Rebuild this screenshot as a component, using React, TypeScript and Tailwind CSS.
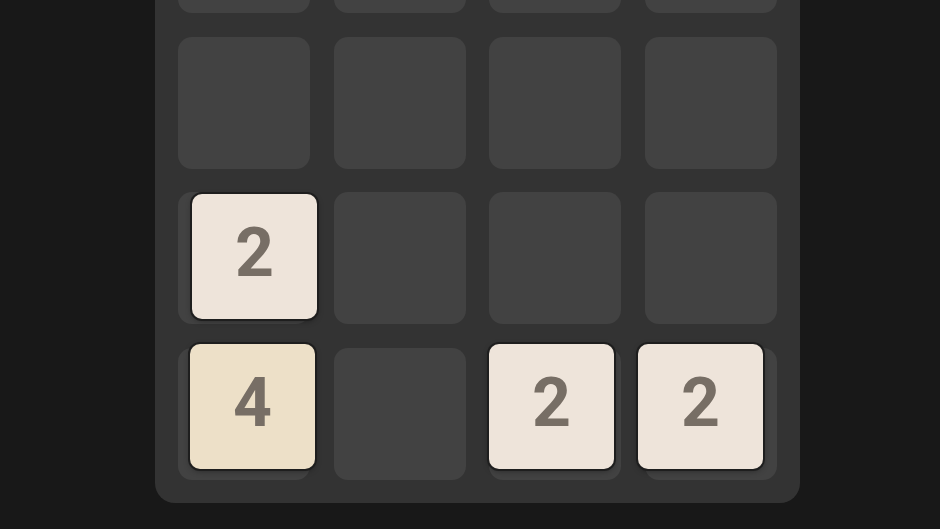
type Tile = { value: number; x: number; y: number }

// empty board slots, 4x4
const cells = Array.from({ length: 16 }, (_, i) => i)

// tiles sit over the grid mid-slide, so they carry their own offsets
const tiles: Tile[] = [
  { value: 2, x: 37, y: 336 },
  { value: 4, x: 35, y: 486 },
  { value: 2, x: 334, y: 486 },
  { value: 2, x: 483, y: 486 },
]

const tileColors: Record<number, string> = {
  2: "bg-[#eee4da]",
  4: "bg-[#ede0c8]",
}

const TileBlock = ({ tile }: { tile: Tile }) => {
  return (
    <div
      className={`absolute w-[125px] h-[125px] rounded-[10px] ${tileColors[tile.value]} ring-2 ring-[#1e1e1e] shadow-[0_2px_6px_rgba(0,0,0,0.4)] flex items-center justify-center`}
      style={{ left: tile.x, top: tile.y }}
    >
      <span className="text-[68px] leading-none font-bold text-[#776e65] font-['Roboto',sans-serif] -mt-[7px]">
        {tile.value}
      </span>
    </div>
  )
}

export default function App() {
  return (
    <div className="h-screen overflow-hidden bg-[#181818]">
      <div className="pl-[155px] -mt-[142px]">
        <div className="relative w-[645px] h-[645px] rounded-[20px] bg-[#333333] p-[23px] grid grid-cols-4 grid-rows-4 gap-[23.5px]">
          {cells.map((c) => (
            <div key={c} className="rounded-[14px] bg-[#424242]" />
          ))}
          {tiles.map((t, i) => (
            <TileBlock key={i} tile={t} />
          ))}
        </div>
      </div>
    </div>
  )
}
